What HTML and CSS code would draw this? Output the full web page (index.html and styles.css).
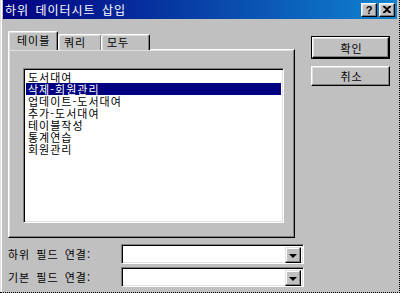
FILE: index.html
```html
<!DOCTYPE html>
<html lang="ko">
<head>
<meta charset="utf-8">
<title>하위 데이터시트 삽입</title>
<link rel="stylesheet" href="styles.css">
</head>
<body>
<div class="window">
  <div class="titlebar">
    <span class="title">하위 데이터시트 삽입</span>
    <div class="tbtns">
      <span class="tbtn help">?</span>
      <span class="tbtn close"><svg width="8" height="7" viewBox="0 0 8 7"><path d="M0 0h2l2 2 2-2h2v1L5 3.5 8 6v1H6L4 5 2 7H0V6l3-2.5L0 1z" fill="#000"/></svg></span>
    </div>
  </div>
  <div class="body">
    <div class="leftcol">
      <div class="tabstrip">
        <div class="tab active">테이블</div>
        <div class="tab t2">쿼리</div>
        <div class="tab t3">모두</div>
      </div>
      <div class="panel">
        <div class="listbox">
          <div class="item">도서대여</div>
          <div class="item sel">삭제-회원관리</div>
          <div class="item">업데이트-도서대여</div>
          <div class="item">추가-도서대여</div>
          <div class="item">테이블작성</div>
          <div class="item">통계연습</div>
          <div class="item">회원관리</div>
        </div>
      </div>
    </div>
    <div class="rightcol">
      <div class="btn default"><span class="btn-in">확인</span></div>
      <div class="btn">취소</div>
    </div>
  </div>
  <div class="fields">
    <div class="field">
      <span class="label">하위 필드 연결:</span>
      <div class="combo"><div class="combo-text"></div><div class="combo-btn"><span class="arrow"></span></div></div>
    </div>
    <div class="field">
      <span class="label">기본 필드 연결:</span>
      <div class="combo"><div class="combo-text"></div><div class="combo-btn"><span class="arrow"></span></div></div>
    </div>
  </div>
</div>
</body>
</html>
```
FILE: styles.css
```css
* { box-sizing: border-box; }
html, body { margin: 0; padding: 0; }
body {
  width: 400px;
  height: 293px;
  overflow: hidden;
  background: #c0c0c0;
  font-family: "Noto Sans CJK KR", "Noto Sans", sans-serif;
  font-size: 11px;
  color: #000;
}
.window {
  width: 400px;
  height: 293px;
  background: #c0c0c0;
  border-right: 1px dotted #000;
  border-bottom: 1px dotted #000;
  box-shadow: inset 1px 0 #dfdfdf, inset 2px 0 #ffffff;
}
.titlebar {
  height: 19px;
  margin: 0 2px 0 3px;
  display: flex;
  align-items: center;
  background: linear-gradient(90deg, #000080 0%, #1084d0 100%);
}
.title {
  color: #fff;
  font-size: 12px;
  line-height: 19px;
  padding-left: 2px;
  letter-spacing: 1px;
  word-spacing: 2px;
}
.tbtns {
  margin-left: auto;
  margin-right: 2px;
  display: flex;
  gap: 2px;
}
.tbtn {
  width: 16px;
  height: 14px;
  background: #c0c0c0;
  border-top: 1px solid #fff;
  border-left: 1px solid #fff;
  border-right: 1px solid #000;
  border-bottom: 1px solid #000;
  box-shadow: inset -1px -1px #808080, inset 1px 1px #dfdfdf;
  display: flex;
  align-items: center;
  justify-content: center;
}
.help {
  font-family: "Liberation Sans", sans-serif;
  font-weight: bold;
  font-size: 11px;
  line-height: 12px;
}
.body {
  display: flex;
  padding: 12px 0 0 8px;
}
.leftcol {
  width: 287px;
}
.tabstrip {
  display: flex;
  align-items: flex-end;
  height: 19px;
  margin-bottom: -1px;
  position: relative;
  z-index: 1;
}
.tab {
  height: 16px;
  border-top: 1px solid #fff;
  border-left: 1px solid #fff;
  border-right: 1px solid #000;
  border-radius: 2px 2px 0 0;
  box-shadow: inset -1px 0 #808080, inset 1px 1px #dfdfdf;
  background: #c0c0c0;
  line-height: 14px;
  padding-left: 5px;
  letter-spacing: 1px;
}
.tab.active {
  width: 50px;
  height: 19px;
  padding-left: 8px;
  line-height: 16px;
}
.t2 { width: 44px; }
.t3 { width: 49px; margin-left: -1px; }
.panel {
  height: 189px;
  border-top: 1px solid #fff;
  border-left: 1px solid #fff;
  border-right: 1px solid #000;
  border-bottom: 1px solid #000;
  box-shadow: inset -1px -1px #808080, inset 1px 1px #dfdfdf;
  padding: 18px 10px 14px 14px;
  display: flex;
}
.listbox {
  flex: 1;
  background: #fff;
  border-top: 1px solid #808080;
  border-left: 1px solid #808080;
  border-right: 1px solid #fff;
  border-bottom: 1px solid #fff;
  box-shadow: inset 1px 1px #000, inset -1px -1px #dfdfdf;
  padding: 2px 2px 0 2px;
}
.item {
  height: 12px;
  line-height: 12px;
  padding-left: 2px;
  white-space: nowrap;
  letter-spacing: 1px;
}
.item.sel {
  background: #000080;
  color: #fff;
}
.rightcol {
  margin-left: 16px;
  padding-top: 5px;
  width: 79px;
  display: flex;
  flex-direction: column;
  gap: 7px;
}
.btn {
  height: 20px;
  border-top: 1px solid #fff;
  border-left: 1px solid #fff;
  border-right: 1px solid #000;
  border-bottom: 1px solid #000;
  box-shadow: inset -1px -1px #808080, inset 1px 1px #dfdfdf;
  display: flex;
  align-items: center;
  justify-content: center;
  padding-left: 2px;
  letter-spacing: 1px;
}
.btn.default {
  height: 23px;
  border: 1px solid #000;
  box-shadow: none;
  padding: 0;
}
.btn-in {
  flex: 1;
  align-self: stretch;
  border-top: 1px solid #fff;
  border-left: 1px solid #fff;
  border-right: 1px solid #000;
  border-bottom: 1px solid #000;
  box-shadow: inset -1px -1px #808080, inset 1px 1px #dfdfdf;
  display: flex;
  align-items: center;
  justify-content: center;
  padding-left: 2px;
}
.fields {
  padding: 6px 0 0 8px;
  display: flex;
  flex-direction: column;
  gap: 3px;
}
.field {
  display: flex;
  align-items: center;
  height: 20px;
}
.label {
  width: 113px;
  word-spacing: 2px;
  letter-spacing: 1px;
  font-size: 11px;
}
.combo {
  width: 183px;
  height: 20px;
  background: #fff;
  border-top: 1px solid #808080;
  border-left: 1px solid #808080;
  border-right: 1px solid #fff;
  border-bottom: 1px solid #fff;
  box-shadow: inset 1px 1px #000, inset -1px -1px #dfdfdf;
  padding: 2px 2px 1px 2px;
  display: flex;
}
.combo-text { flex: 1; }
.combo-btn {
  width: 16px;
  height: 16px;
  background: #c0c0c0;
  border-top: 1px solid #dfdfdf;
  border-left: 1px solid #dfdfdf;
  border-right: 1px solid #000;
  border-bottom: 1px solid #000;
  box-shadow: inset -1px -1px #808080, inset 1px 1px #fff;
  display: flex;
  align-items: center;
  justify-content: center;
}
.arrow {
  width: 0;
  height: 0;
  border-left: 4px solid transparent;
  border-right: 4px solid transparent;
  border-top: 4px solid #000;
  margin-top: 1px;
}
```
